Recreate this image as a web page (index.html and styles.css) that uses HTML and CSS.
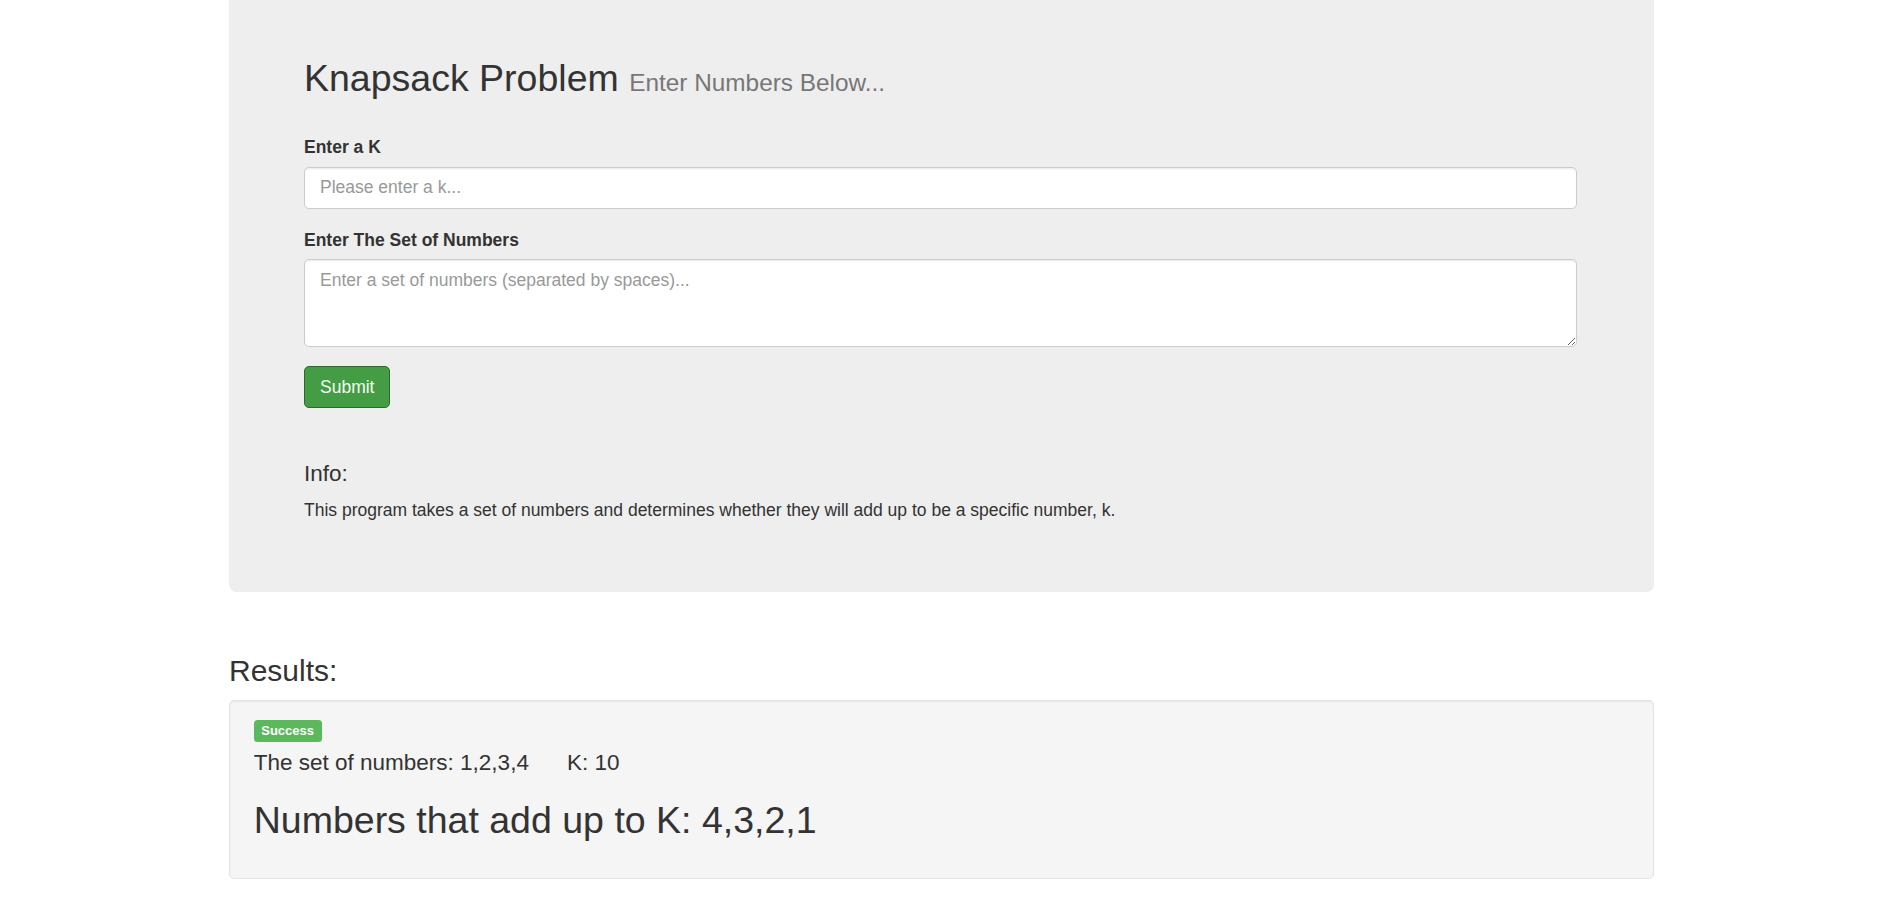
FILE: index.html
```html
<!DOCTYPE html>
<html lang="en">
<head>
<meta charset="utf-8">
<title>Knapsack Problem</title>
<link rel="stylesheet" href="styles.css">
</head>
<body>
<div class="container">
  <div class="jumbotron">
    <h2 class="title">Knapsack Problem <small>Enter Numbers Below...</small></h2>
    <form class="form">
      <div class="form-group">
        <label class="field-label" for="k">Enter a K</label>
        <input class="form-control" id="k" type="text" placeholder="Please enter a k...">
      </div>
      <div class="form-group">
        <label class="field-label" for="nums">Enter The Set of Numbers</label>
        <textarea class="form-control textarea" id="nums" placeholder="Enter a set of numbers (separated by spaces)..."></textarea>
      </div>
      <button class="btn-success" type="button">Submit</button>
    </form>
    <h4 class="info-title">Info:</h4>
    <p class="info-text">This program takes a set of numbers and determines whether they will add up to be a specific number, k.</p>
  </div>

  <h3 class="results-title">Results:</h3>
  <div class="well">
    <div class="status"><span class="label-success">Success</span></div>
    <h4 class="set-line"><span>The set of numbers: 1,2,3,4</span><span class="k-value">K: 10</span></h4>
    <h2 class="answer">Numbers that add up to K: 4,3,2,1</h2>
  </div>
</div>
</body>
</html>
```

FILE: styles.css
```css
* {
  box-sizing: border-box;
}

html, body {
  margin: 0;
  padding: 0;
  background: #ffffff;
}

body {
  font-family: "Liberation Sans", Arial, Helvetica, sans-serif;
  font-size: 17.5px;
  line-height: 25px;
  color: #333333;
}

.container {
  width: 1425px;
  margin: 0 auto;
}

.jumbotron {
  background: #eeeeee;
  border-radius: 0 0 7.5px 7.5px;
  padding: 58px 77px 56px 75px;
  margin-bottom: 0;
}

.title {
  margin: 0 0 36px 0;
  font-size: 37.5px;
  line-height: 41.25px;
  font-weight: 500;
  color: #333333;
}

.title small {
  font-size: 65%;
  font-weight: 400;
  line-height: 1;
  color: #777777;
}

.form {
  margin: 0;
}

.form-group {
  margin-bottom: 18.75px;
}

.field-label {
  display: block;
  font-weight: 700;
  margin-bottom: 6.25px;
  line-height: 25px;
}

.form-control {
  display: block;
  width: 100%;
  height: 42.5px;
  padding: 7.5px 15px;
  font-family: "Liberation Sans", Arial, Helvetica, sans-serif;
  font-size: 17.5px;
  line-height: 25px;
  color: #555555;
  background: #ffffff;
  border: 1.25px solid #cccccc;
  border-radius: 5px;
  box-shadow: inset 0 1.25px 1.25px rgba(0, 0, 0, 0.075);
  outline: none;
  margin: 0;
}

.form-control::placeholder {
  color: #999999;
  opacity: 1;
}

.textarea {
  height: 88px;
  resize: vertical;
}

.btn-success {
  display: inline-block;
  height: 42.5px;
  padding: 7.5px 15px;
  font-family: "Liberation Sans", Arial, Helvetica, sans-serif;
  font-size: 17.5px;
  line-height: 25px;
  color: #f3fff3;
  background: #449d44;
  border: 1.25px solid #2b6b2b;
  border-radius: 5px;
  cursor: pointer;
  margin: 0;
}

.info-title {
  margin: 54px 0 11px 0;
  font-size: 22.5px;
  line-height: 24.75px;
  font-weight: 500;
}

.info-text {
  margin: 0 0 12.5px 0;
}

.results-title {
  margin: 62.5px 0 12.5px 0;
  font-size: 30px;
  line-height: 33px;
  font-weight: 500;
}

.well {
  background: #f5f5f5;
  border: 1.25px solid #e3e3e3;
  border-radius: 5px;
  box-shadow: inset 0 1.25px 1.25px rgba(0, 0, 0, 0.05);
  padding: 19px 23.75px 23.75px 23.75px;
}

.status {
  height: 22px;
  margin-bottom: 9px;
}

.label-success {
  display: inline-block;
  height: 22px;
  padding: 0 7.5px;
  font-size: 13px;
  line-height: 22px;
  font-weight: 700;
  color: #ffffff;
  background: #5cb85c;
  border-radius: 3.5px;
  vertical-align: top;
}

.set-line {
  margin: 0;
  font-size: 22.5px;
  line-height: 24.75px;
  font-weight: 500;
}

.k-value {
  margin-left: 38px;
}

.answer {
  margin: 25px 0 12.5px 0;
  font-size: 37.5px;
  line-height: 41.25px;
  font-weight: 500;
}
```
